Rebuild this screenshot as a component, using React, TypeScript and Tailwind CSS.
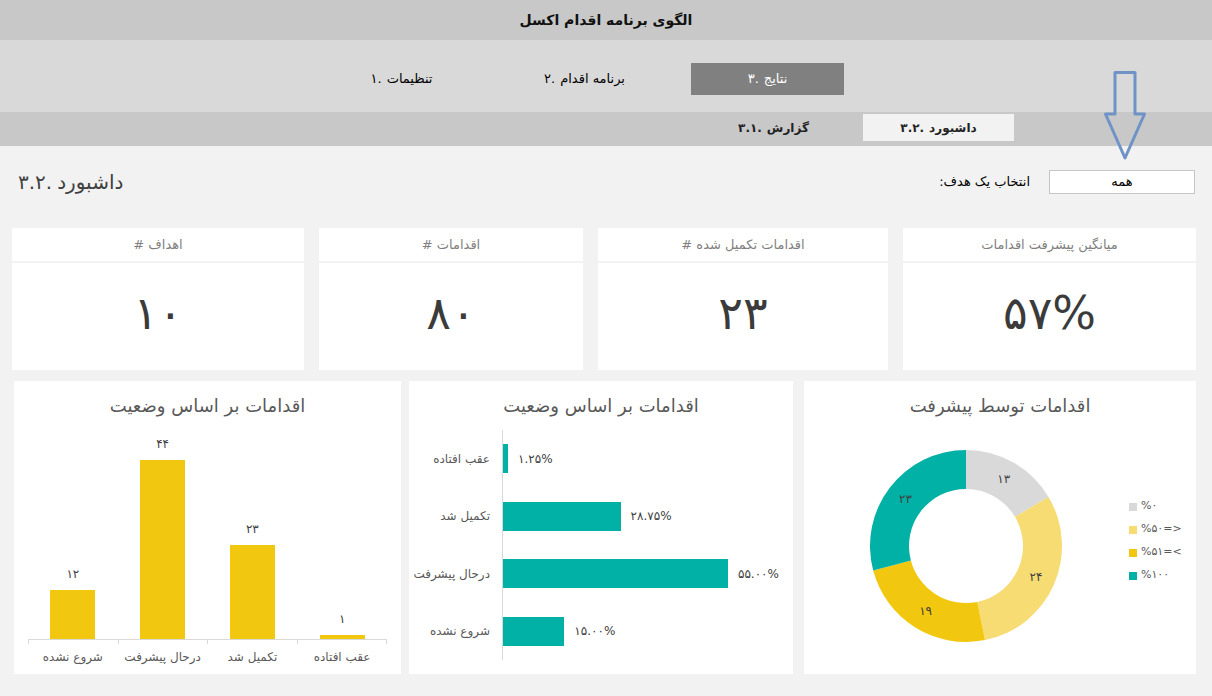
import React from 'react'

// numbered label: number on the left, word on the right (as the sheet shows it)
function Numbered({ num, text, className = '' }: { num: string; text: string; className?: string }) {
  return (
    <span dir="ltr" className={'flex items-center gap-[5px] ' + className}>
      <span>{num}</span>
      <span dir="rtl">{text}</span>
    </span>
  )
}

const columns = [
  { label: 'شروع نشده', v: 12, t: '۱۲' },
  { label: 'درحال پیشرفت', v: 44, t: '۴۴' },
  { label: 'تکمیل شد', v: 23, t: '۲۳' },
  { label: 'عقب افتاده', v: 1, t: '۱' },
]

const bars = [
  { label: 'عقب افتاده', v: 1.25, t: '۱.۲۵%' },
  { label: 'تکمیل شد', v: 28.75, t: '۲۸.۷۵%' },
  { label: 'درحال پیشرفت', v: 55, t: '۵۵.۰۰%' },
  { label: 'شروع نشده', v: 15, t: '۱۵.۰۰%' },
]

const slices = [
  { v: 13, t: '۱۳', color: '#d9d9d9', legend: '%۰' },
  { v: 24, t: '۲۴', color: '#f6dc72', legend: '%۵۰=>' },
  { v: 19, t: '۱۹', color: '#f1c80f', legend: '%۵۱=<' },
  { v: 23, t: '۲۳', color: '#01b1a5', legend: '%۱۰۰' },
]

const kpis = [
  { title: 'اهداف #', value: '۱۰', w: 'w-[292px]' },
  { title: 'اقدامات #', value: '۸۰', w: 'w-[264px]' },
  { title: 'اقدامات تکمیل شده #', value: '۲۳', w: 'w-[290px]' },
  { title: 'میانگین پیشرفت اقدامات', value: '۵۷%', w: 'w-[293px]' },
]

function pt(cx: number, cy: number, r: number, a: number) {
  return [cx + r * Math.sin(a), cy - r * Math.cos(a)]
}

function Donut() {
  const total = slices.reduce((s, x) => s + x.v, 0)
  const cx = 100
  const cy = 100
  const r1 = 96
  const r0 = 57
  let acc = 0
  return (
    <svg width="200" height="200" viewBox="0 0 200 200">
      {slices.map((s) => {
        const a0 = (acc / total) * Math.PI * 2
        acc += s.v
        const a1 = (acc / total) * Math.PI * 2
        const large = a1 - a0 > Math.PI ? 1 : 0
        const [x0, y0] = pt(cx, cy, r1, a0)
        const [x1, y1] = pt(cx, cy, r1, a1)
        const [x2, y2] = pt(cx, cy, r0, a1)
        const [x3, y3] = pt(cx, cy, r0, a0)
        const [lx, ly] = pt(cx, cy, 76.5, (a0 + a1) / 2)
        return (
          <g key={s.t}>
            <path
              d={`M${x0} ${y0} A${r1} ${r1} 0 ${large} 1 ${x1} ${y1} L${x2} ${y2} A${r0} ${r0} 0 ${large} 0 ${x3} ${y3} Z`}
              fill={s.color}
            />
            <text x={lx} y={ly} textAnchor="middle" dominantBaseline="central" fontSize="12" fill="#404040">
              {s.t}
            </text>
          </g>
        )
      })}
    </svg>
  )
}

export default function App() {
  return (
    <div className="relative w-[1212px] h-[696px] overflow-hidden bg-[#f2f2f2] font-['DejaVu_Sans',sans-serif] text-black">
      {/* عنوان */}
      <div className="h-[40px] bg-[#c8c8c8] flex items-center justify-center">
        <span dir="rtl" className="text-[14px] font-bold text-[#111]">الگوی برنامه اقدام اکسل</span>
      </div>

      {/* منوی اصلی */}
      <div className="h-[72px] bg-[#d9d9d9] flex items-start pt-[23px] pl-[325px] gap-[30px]">
        <div className="w-[153px] h-[32px] flex items-center justify-center text-[13px]">
          <Numbered num="۱." text="تنظیمات" />
        </div>
        <div className="w-[153px] h-[32px] flex items-center justify-center text-[13px]">
          <Numbered num="۲." text="برنامه اقدام" />
        </div>
        <div className="w-[153px] h-[32px] flex items-center justify-center text-[13px] bg-[#808080] text-white">
          <Numbered num="۳." text="نتایج" />
        </div>
      </div>

      {/* زیرمنو */}
      <div className="h-[34px] bg-[#c8c8c8] flex items-start pt-[2px] pl-[698px] gap-[14px]">
        <div className="w-[151px] h-[27px] flex items-center justify-center text-[12px] font-bold text-[#222]">
          <Numbered num="۳.۱." text="گزارش" />
        </div>
        <div className="w-[151px] h-[27px] flex items-center justify-center text-[12px] font-bold text-[#222] bg-[#f2f2f2]">
          <Numbered num="۳.۲." text="داشبورد" />
        </div>
      </div>

      <div className="px-[12px]">
        {/* سربرگ داشبورد */}
        <div className="h-[72px] flex items-center justify-between">
          <Numbered num="۳.۲." text="داشبورد" className="pl-[6px] text-[20px] text-[#404040]" />
          <div className="flex items-center gap-[19px] mr-[5px]">
            <span dir="rtl" className="text-[13px]">انتخاب یک هدف:</span>
            <div className="w-[146px] h-[24px] bg-white border border-[#c6c6c6] flex items-center justify-center text-[13px]" dir="rtl">
              همه
            </div>
          </div>
        </div>

        {/* کارت‌های شاخص */}
        <div className="mt-[10px] flex gap-[15px]">
          {kpis.map((k) => (
            <div key={k.title} className={k.w + ' h-[142px] bg-white flex flex-col'}>
              <div dir="rtl" className="h-[35px] flex items-center justify-center text-[13px] text-[#7f7f7f] border-b-2 border-[#f2f2f2]">
                {k.title}
              </div>
              <div dir="ltr" className="flex-1 flex items-center justify-center pb-[6px] text-[46px] tracking-[-3px] text-[#3b3b3b]">
                {k.value}
              </div>
            </div>
          ))}
        </div>

        {/* نمودارها */}
        <div className="mt-[11px] pl-[2px] flex">
          {/* ستونی */}
          <div className="w-[387px] h-[293px] bg-white flex flex-col">
            <div dir="rtl" className="h-[48px] flex items-center justify-center text-[18px] text-[#595959]">
              اقدامات بر اساس وضعیت
            </div>
            <div className="mx-[14px] h-[210px] flex items-end">
              {columns.map((c) => (
                <div key={c.label} className="flex-1 flex flex-col items-center justify-end">
                  <span className="text-[12px] leading-[16px] mb-[8px] text-[#404040]">{c.t}</span>
                  <div className="w-[45px] bg-[#f1c80f]" style={{ height: c.v * 4.07 }} />
                </div>
              ))}
            </div>
            <div className="mx-[14px] h-[5px] flex border-t border-[#d9d9d9]">
              <div className="flex-1 border-l border-[#d9d9d9]" />
              <div className="flex-1 border-l border-[#d9d9d9]" />
              <div className="flex-1 border-l border-[#d9d9d9]" />
              <div className="flex-1 border-l border-r border-[#d9d9d9]" />
            </div>
            <div className="mx-[14px] mt-[5px] flex">
              {columns.map((c) => (
                <span key={c.label} dir="rtl" className="flex-1 text-center text-[12px] leading-[16px] text-[#595959]">
                  {c.label}
                </span>
              ))}
            </div>
          </div>

          {/* میله‌ای */}
          <div className="ml-[8px] w-[384px] h-[293px] bg-white flex flex-col">
            <div dir="rtl" className="h-[48px] flex items-center justify-center text-[18px] text-[#595959]">
              اقدامات بر اساس وضعیت
            </div>
            <div className="mt-[1px] h-[230px] flex">
              <div className="w-[93px] flex flex-col">
                {bars.map((b) => (
                  <div key={b.label} className="h-[57.5px] flex items-center justify-end pr-[12px] text-[12px] text-[#595959]">
                    <span dir="rtl">{b.label}</span>
                  </div>
                ))}
              </div>
              <div className="flex-1 flex flex-col border-l border-[#d9d9d9]">
                {bars.map((b) => (
                  <div key={b.label} className="h-[57.5px] flex items-center">
                    <div className="h-[29px] bg-[#01b1a5]" style={{ width: b.v * 4.09 }} />
                    <span dir="ltr" className="ml-[10px] text-[12px] text-[#404040]">{b.t}</span>
                  </div>
                ))}
              </div>
            </div>
          </div>

          {/* دونات */}
          <div className="ml-[11px] w-[392px] h-[293px] bg-white flex flex-col">
            <div dir="rtl" className="h-[48px] flex items-center justify-center text-[18px] text-[#595959]">
              اقدامات توسط پیشرفت
            </div>
            <div className="flex items-start">
              <div className="ml-[62px] mt-[17px]">
                <Donut />
              </div>
              <div className="ml-[63px] mt-[66px] flex flex-col">
                {slices.map((s) => (
                  <div key={s.legend} className="h-[23px] flex items-center gap-[4px]">
                    <span className="w-[8px] h-[8px]" style={{ background: s.color }} />
                    <span dir="ltr" className="text-[11px] text-[#595959]">{s.legend}</span>
                  </div>
                ))}
              </div>
            </div>
          </div>
        </div>
      </div>

      {/* فلش راهنما */}
      <svg className="absolute left-[1100px] top-[66px]" width="50" height="100" viewBox="0 0 50 100">
        <path
          d="M15 6.5 L35 6.5 L35 48 L44.5 48 L25 92 L5.5 48 L15 48 Z"
          fill="none"
          stroke="#6f93c6"
          strokeWidth="3"
          strokeLinejoin="round"
        />
      </svg>
    </div>
  )
}
